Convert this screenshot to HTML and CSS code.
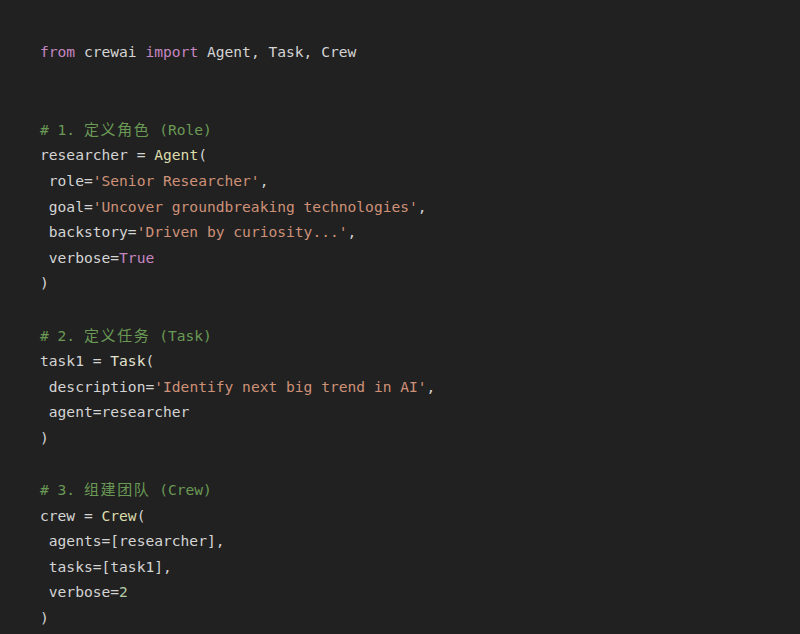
FILE: index.html
```html
<!DOCTYPE html>
<html lang="en">
<head>
<meta charset="utf-8">
<title>CrewAI example</title>
<link rel="stylesheet" href="styles.css">
</head>
<body>
<pre class="code"><code><span class="kw">from</span> crewai <span class="kw">import</span> Agent, Task, Crew


<span class="cm"># 1. <span class="cjk">定义角色</span> (Role)</span>
researcher = <span class="fn">Agent</span>(
 role=<span class="str">'Senior Researcher'</span>,
 goal=<span class="str">'Uncover groundbreaking technologies'</span>,
 backstory=<span class="str">'Driven by curiosity...'</span>,
 verbose=<span class="kw">True</span>
)

<span class="cm"># 2. <span class="cjk">定义任务</span> (Task)</span>
task1 = <span class="fn2">Task</span>(
 description=<span class="str">'Identify next big trend in AI'</span>,
 agent=researcher
)

<span class="cm"># 3. <span class="cjk">组建团队</span> (Crew)</span>
crew = <span class="fn">Crew</span>(
 agents=[researcher],
 tasks=[task1],
 verbose=<span class="num">2</span>
)</code></pre>
</body>
</html>
```
FILE: styles.css
```css
html, body {
  margin: 0;
  padding: 0;
  background: #212121;
  height: 100%;
}
body {
  overflow: hidden;
}
.code {
  margin: 0;
  padding: 39px 0 0 40px;
  font-family: "DejaVu Sans Mono", "Liberation Mono", "Noto Sans CJK SC", monospace;
  font-size: 14.6px;
  line-height: 25.6px;
  color: #d4d4d4;
  white-space: pre;
}
.code code {
  font-family: inherit;
}
.kw { color: #c586c0; }
.fn { color: #dcdcaa; }
.fn2 { color: #e2e2cf; }
.str { color: #ce9178; }
.cm { color: #6a9955; }
.num { color: #b5cea8; }
.cjk {
  font-family: "Noto Sans CJK SC", sans-serif;
  font-size: 15px;
  letter-spacing: 1.6px;
}
```
